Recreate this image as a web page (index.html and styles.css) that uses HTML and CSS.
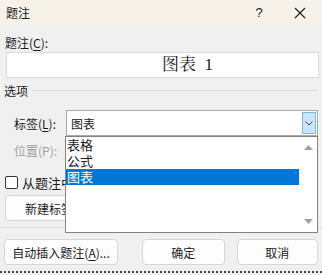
FILE: index.html
```html
<!DOCTYPE html>
<html lang="zh-CN">
<head>
  <meta charset="UTF-8">
  <title>题注</title>
  <link rel="stylesheet" href="styles.css">
</head>
<body>
  <div class="dialog">
    <div class="titlebar">
      <span class="title">题注</span>
      <span class="help">?</span>
      <span class="close">
        <svg width="12" height="12" viewBox="0 0 12 12"><path d="M1 1L11 11M11 1L1 11" stroke="#1a1a1a" stroke-width="1.1" fill="none"/></svg>
      </span>
    </div>
    <div class="content">
      <div class="field-label">题注(<u>C</u>):</div>
      <div class="caption-box">图表&nbsp;&nbsp;1</div>

      <div class="group-title"><span>选项</span><span class="group-line"></span></div>

      <div class="row">
        <span class="row-label">标签(<u>L</u>):</span>
        <div class="combo">
          <span class="combo-value">图表</span>
          <span class="combo-btn">
            <svg width="8" height="5" viewBox="0 0 8 5"><path d="M0.5 0.5L4 4L7.5 0.5" stroke="#444" stroke-width="1" fill="none"/></svg>
          </span>
          <div class="dropdown">
            <div class="options">
              <div class="option">表格</div>
              <div class="option">公式</div>
              <div class="option selected">图表</div>
            </div>
            <div class="scrollbar">
              <svg width="9" height="5" viewBox="0 0 9 5"><path d="M0 5L4.5 0L9 5Z" fill="#a0a0a0"/></svg>
              <svg width="9" height="5" viewBox="0 0 9 5"><path d="M0 0L4.5 5L9 0Z" fill="#a0a0a0"/></svg>
            </div>
          </div>
        </div>
      </div>

      <div class="row row-disabled">
        <span class="row-label">位置(P):</span>
      </div>

      <label class="check"><span class="box"></span><span class="check-text">从题注中不包含标签(E)</span></label>

      <div class="row-buttons">
        <button class="btn btn-new">新建标签(N)...</button>
      </div>

      <div class="separator"></div>

      <div class="footer">
        <button class="btn btn-auto">自动插入题注(<u>A</u>)...</button>
        <button class="btn btn-ok">确定</button>
        <button class="btn btn-cancel">取消</button>
      </div>
    </div>
    <div class="bottom-edge"></div>
  </div>
</body>
</html>
```

FILE: styles.css
```css
body {
  margin: 0;
  padding: 0;
  font-family: "Noto Sans CJK SC", "Noto Sans", sans-serif;
  font-size: 12px;
  color: #1a1a1a;
  background: #f0f0f0;
}
.dialog {
  width: 322px;
  height: 275px;
  overflow: hidden;
  background: #f0f0f0;
  position: relative;
}
.titlebar {
  height: 25px;
  background: #f4f2e9;
  display: flex;
  align-items: center;
}
.title {
  margin-left: 6px;
  font-size: 12px;
  flex: 1;
}
.help {
  width: 20px;
  text-align: center;
  font-family: "Liberation Sans", sans-serif;
  font-size: 13px;
  margin-right: 25px;
}
.close {
  width: 12px;
  height: 12px;
  margin-right: 16px;
  display: flex;
}
.content {
  padding: 0 4px;
}
.field-label {
  margin-top: 9px;
  margin-left: 1px;
  height: 17px;
  line-height: 17px;
}
u {
  text-decoration: underline;
  text-underline-offset: 2px;
}
.caption-box {
  margin: 1px 0 0 2px;
  height: 24px;
  width: 156px;
  padding-left: 155px;
  background: #fff;
  border: 1px solid #dadada;
  font-family: "Liberation Serif", "Noto Serif CJK SC", "Noto Sans CJK SC", serif;
  font-size: 17px;
  line-height: 24px;
}
.group-title {
  display: flex;
  align-items: center;
  margin-top: 3px;
  height: 18px;
}
.group-line {
  flex: 1;
  height: 1px;
  background: #dcdcdc;
  margin-left: 4px;
}
.row {
  display: flex;
  align-items: center;
  margin-top: 11px;
  height: 26px;
}
.row-label {
  flex: none;
  width: 52px;
  padding-left: 10px;
}
.row-disabled {
  margin-top: 1px;
  width: 60px;
  overflow: hidden;
  color: #a0a0a0;
}
.combo {
  position: relative;
  width: 252px;
  height: 24px;
  background: #fff;
  border: 1px solid #a9a9a9;
  display: flex;
  align-items: center;
}
.combo-value {
  flex: 1;
  padding-left: 4px;
}
.combo-btn {
  width: 14px;
  height: 22px;
  margin-right: 1px;
  background: #cce4f7;
  border: 1px solid #77b7ea;
  display: flex;
  align-items: center;
  justify-content: center;
  box-sizing: border-box;
}
.dropdown {
  position: absolute;
  left: -2px;
  top: 25px;
  width: 251px;
  height: 95px;
  background: #fff;
  border: 1px solid #828282;
  display: flex;
  z-index: 2;
}
.options {
  flex: 1;
}
.option {
  height: 16px;
  line-height: 16px;
  padding-left: 1px;
  font-size: 13px;
}
.option.selected {
  background: #0078d7;
  color: #fff;
  margin-right: 1px;
}
.scrollbar {
  width: 17px;
  display: flex;
  flex-direction: column;
  justify-content: space-between;
  align-items: center;
  padding: 8px 0;
}
.check {
  display: flex;
  align-items: center;
  margin-top: 11px;
  height: 16px;
  width: 61px;
  overflow: hidden;
  white-space: nowrap;
  font-size: 13px;
}
.check-text {
  overflow: hidden;
}
.box {
  flex: none;
  width: 11px;
  height: 11px;
  border: 1px solid #333;
  border-radius: 2px;
  background: #fff;
  margin: 0 4px 0 1px;
}
.row-buttons {
  margin-top: 5px;
  width: 61px;
  overflow: hidden;
}
.btn {
  font-family: "Noto Sans CJK SC", "Noto Sans", sans-serif;
  font-size: 12px;
  color: #1a1a1a;
  background: #fdfdfd;
  border: 1px solid #d6d6d6;
  border-radius: 4px;
  height: 26px;
  padding: 0;
  margin: 0;
}
.btn-new {
  width: 100px;
  margin-left: 1px;
  text-align: left;
  padding-left: 19px;
  white-space: nowrap;
}
.separator {
  height: 1px;
  background: #dedede;
  margin: 6px -4px 0;
}
.footer {
  display: flex;
  margin-top: 11px;
}
.btn-auto {
  width: 115px;
}
.btn-ok {
  width: 83px;
  margin-left: 24px;
}
.btn-cancel {
  width: 82px;
  margin-left: 12px;
}
.bottom-edge {
  position: absolute;
  left: 0;
  right: 0;
  bottom: 0;
  height: 2px;
  border-top: 2px dotted #444;
}
```
